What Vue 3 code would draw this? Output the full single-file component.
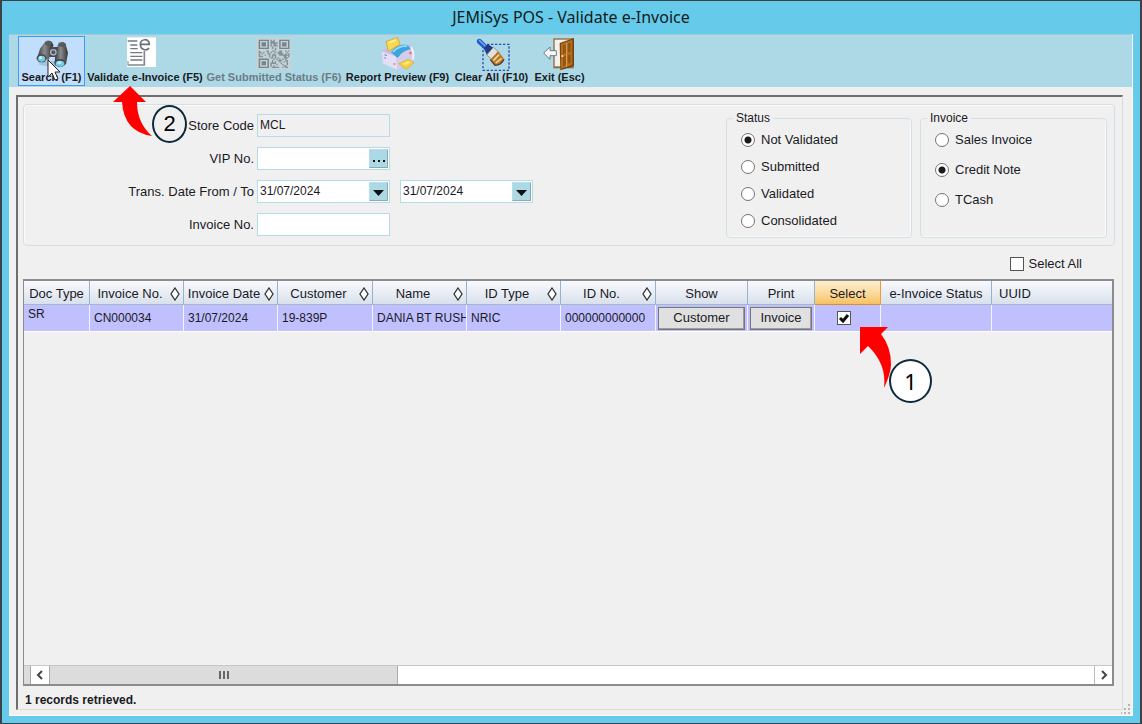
<script setup>
import { ref } from 'vue'

const status = ref('Not Validated')
const invoiceType = ref('Credit Note')
const selectAll = ref(false)
const rowSelected = ref(true)
const storeCode = ref('MCL')
const vipNo = ref('')
const dateFrom = ref('31/07/2024')
const dateTo = ref('31/07/2024')
const invoiceNo = ref('')

const statuses = ['Not Validated', 'Submitted', 'Validated', 'Consolidated']
const invoiceTypes = ['Sales Invoice', 'Credit Note', 'TCash']

const columns = [
  { name: 'Doc Type', cls: 'c-doc' },
  { name: 'Invoice No.', cls: 'c-std', sort: true },
  { name: 'Invoice Date', cls: 'c-std', sort: true },
  { name: 'Customer', cls: 'c-wide', sort: true },
  { name: 'Name', cls: 'c-std', sort: true },
  { name: 'ID Type', cls: 'c-std', sort: true },
  { name: 'ID No.', cls: 'c-wide', sort: true },
  { name: 'Show', cls: 'c-show' },
  { name: 'Print', cls: 'c-print' },
  { name: 'Select', cls: 'c-select' },
  { name: 'e-Invoice Status', cls: 'c-status' },
  { name: 'UUID', cls: 'c-uuid' },
]
const values = ['CN000034', '31/07/2024', '19-839P', 'DANIA BT RUSH', 'NRIC', '000000000000']

// Data modules of the 21 x 21 code; the three finder squares are drawn separately.
const inFinder = (x, y) => (x < 8 && y < 8) || (x > 12 && y < 8) || (x < 8 && y > 12)
const modules = []
for (let y = 0; y < 21; y++) {
  for (let x = 0; x < 21; x++) {
    const h = (x * 73 + y * 151 + x * y * 37 + ((x * x * 13) ^ (y * y * 29))) % 17
    if (!inFinder(x, y) && h < 8) modules.push(`M${x} ${y}h1v1h-1z`)
  }
}
const qrPath = modules.join('')
const finders = [[0, 0], [14, 0], [0, 14]]
</script>

<template>
  <main class="window">
    <h1 class="title">JEMiSys POS - Validate e-Invoice</h1>

    <div class="client">
      <nav class="toolbar" aria-label="Actions">
        <button type="button" class="tool t-search">
          <svg class="icon" viewBox="0 0 108 102" aria-hidden="true">
            <defs>
              <linearGradient id="barrel" x1="0" y1="0" x2="1" y2="0">
                <stop offset="0" stop-color="#3a3a3c" />
                <stop offset=".45" stop-color="#8b8b8d" />
                <stop offset="1" stop-color="#323234" />
              </linearGradient>
            </defs>
            <ellipse cx="56" cy="80" rx="42" ry="8" fill="#8ea3b8" opacity=".5" />
            <path d="M34 13q10-6 20 2l4 10-14 44-34-8 8-26z" fill="url(#barrel)" />
            <path d="M74 17q12-6 20 2l8 28-6 34-34-4 2-30z" fill="url(#barrel)" />
            <path d="M48 30h24l-4 30H46z" fill="#48494c" />
            <circle cx="58" cy="46" r="10" fill="#adb8c8" />
            <circle cx="58" cy="46" r="6" fill="#4c5564" />
            <path d="M34 16l12-4 8 6-8 8-14-2zM74 20l14-4 9 7-8 8-14-3z" fill="#5a5a5c" />
            <ellipse cx="23" cy="64" rx="15" ry="12" fill="#44484c" />
            <ellipse cx="23" cy="65" rx="11" ry="9" fill="#74cbe4" />
            <ellipse cx="20" cy="62" rx="5" ry="4" fill="#c9f2fb" />
            <ellipse cx="78" cy="78" rx="17" ry="12" fill="#44484c" />
            <ellipse cx="78" cy="80" rx="13" ry="9" fill="#74cbe4" />
            <ellipse cx="76" cy="77" rx="7" ry="4" fill="#b7ebf7" />
          </svg>
          <span>Search (F1)</span>
        </button>
        <button type="button" class="tool t-validate">
          <svg class="icon" viewBox="0 0 108 102" aria-hidden="true">
            <path d="M0 1h87v89H0z" fill="#fff" />
            <path d="M2 12h29M10 24h21M10 35h22M10 47h36M10 58h36M10 69h36" stroke="#73797d" stroke-width="4" />
            <path d="M52 42v44M2 84h52" stroke="#80868a" stroke-width="5" fill="none" />
            <path d="M3 72v12" stroke="#9aa1a5" stroke-width="4" />
            <path d="M40 22H67C67 3 40 4 40 22C40 40 60 42 66 33" stroke="#697176" stroke-width="5" fill="none" />
          </svg>
          <span>Validate e-Invoice (F5)</span>
        </button>
        <button type="button" class="tool t-get" disabled>
          <svg class="icon" viewBox="0 0 108 102" aria-hidden="true">
            <path d="M1 3h105v95H1z" fill="#c5d2d7" />
            <g transform="translate(8 8) scale(4.4 4.05)">
              <path :d="qrPath" fill="#83939a" />
              <g v-for="([x, y], i) in finders" :key="i" fill="#75858c">
                <path :transform="`translate(${x} ${y})`" fill-rule="evenodd" d="M0 0h7v7H0zM1 1v5h5V1zM2 2h3v3H2z" />
              </g>
            </g>
          </svg>
          <span>Get Submitted Status (F6)</span>
        </button>
        <button type="button" class="tool t-report">
          <svg class="icon" viewBox="0 0 108 102" aria-hidden="true">
            <path d="M5 41L38 24l52-2 13 18-3 42-48 17-44-23z" fill="#c7bfe6" />
            <path d="M5 43l44 16 3 40-43-20z" fill="#e4def6" />
            <path d="M49 59l48-27 5 39-50 28z" fill="#d4cdea" />
            <path d="M18 14l34-13 8 21-35 21z" fill="#f8d951" stroke="#d8ae36" stroke-width="3" />
            <path d="M27 17l20-8" stroke="#fff2a0" stroke-width="5" />
            <path d="M33 46q18-27 48-22l14 12q-28 3-42 27z" fill="#3aa5dd" />
            <path d="M39 45q18-20 42-17" stroke="#94e1f7" stroke-width="5" fill="none" />
            <path d="M92 30q12 13 7 38" stroke="#f2effc" stroke-width="6" fill="none" />
            <path d="M56 80l28-13 18 10-23 20z" fill="#f7cf3c" stroke="#dba531" stroke-width="2" />
            <path d="M68 80l17-8 7 4-15 9z" fill="#ffed7b" />
            <circle cx="91" cy="48" r="4" fill="#ea6f8e" />
            <circle cx="43" cy="81" r="3" fill="#f2825c" />
            <path d="M13 53l8 3M13 62l5 2" stroke="#8377b9" stroke-width="3" />
          </svg>
          <span>Report Preview (F9)</span>
        </button>
        <button type="button" class="tool t-clear">
          <svg class="icon" viewBox="0 0 108 102" aria-hidden="true">
            <path d="M27 22h78v78H27z" fill="none" stroke="#2850ae" stroke-width="4" stroke-dasharray="7 5" />
            <path d="M9 9q7-8 14 0l17 17-10 10L12 20q-6-5-3-11z" fill="#235bc8" />
            <path d="M15 9l22 22" stroke="#78adf4" stroke-width="4" />
            <path d="M29 34l12-13 17 11-19 22z" fill="#203e83" />
            <path d="M38 54l20-23 17 15-20 22z" fill="#dfe1e3" stroke="#6f7376" stroke-width="2" />
            <path d="M50 67l22-24 17 21q-5 20-26 20z" fill="#b87528" />
            <path d="M58 71l17-18M65 78l18-14" stroke="#f3d08b" stroke-width="5" />
            <path d="M49 68l14 17q19 0 27-18" fill="none" stroke="#4d3924" stroke-width="4" />
          </svg>
          <span>Clear All (F10)</span>
        </button>
        <button type="button" class="tool t-exit">
          <svg class="icon" viewBox="0 0 108 102" aria-hidden="true">
            <path d="M34 4h61v90H34z" fill="#8b6c43" />
            <path d="M38 8h52v80H38z" fill="#f3f1eb" />
            <path d="M53 18l43-15v84L55 100z" fill="#77430e" />
            <path d="M57 20l34-12v75L57 95z" fill="#b46e1c" />
            <path d="M63 25l8-3v27l-8 3zM77 20l9-4v28l-9 3zM63 60l8-3v27l-8 3zM77 55l9-3v25l-9 3z" fill="#925410" />
            <path d="M74 18v72" stroke="#dca052" stroke-width="3" />
            <circle cx="61" cy="57" r="3" fill="#ffe694" />
            <path d="M5 48l19-18v11h19v15H24v11z" fill="#f7fafc" stroke="#6d7c85" stroke-width="3" />
          </svg>
          <span>Exit (Esc)</span>
        </button>
      </nav>

      <section class="panel">
        <form class="filters" @submit.prevent>
          <div class="fields">
            <label for="store">Store Code</label>
            <div class="box readonly"><input id="store" v-model="storeCode" type="text" readonly /></div>

            <label for="vip">VIP No.</label>
            <div class="box">
              <input id="vip" v-model="vipNo" type="text" />
              <button type="button" class="mini" aria-label="Look up VIP">
                <svg viewBox="0 0 17 17" aria-hidden="true"><path d="M3 10h2v2H3zM8 10h2v2H8zM13 10h2v2h-2z" /></svg>
              </button>
            </div>

            <label for="from">Trans. Date From / To</label>
            <div class="dates">
              <div class="box">
                <input id="from" v-model="dateFrom" type="text" />
                <button type="button" class="mini" aria-label="Choose start date">
                  <svg viewBox="0 0 17 17" aria-hidden="true"><path d="M3 7h11l-5.500 6z" /></svg>
                </button>
              </div>
              <div class="box">
                <input v-model="dateTo" type="text" aria-label="Trans. Date To" />
                <button type="button" class="mini" aria-label="Choose end date">
                  <svg viewBox="0 0 17 17" aria-hidden="true"><path d="M3 7h11l-5.500 6z" /></svg>
                </button>
              </div>
            </div>

            <label for="invno">Invoice No.</label>
            <div class="box"><input id="invno" v-model="invoiceNo" type="text" /></div>
          </div>

          <fieldset class="group g-status">
            <legend>Status</legend>
            <label v-for="s in statuses" :key="s"><input v-model="status" type="radio" name="status" :value="s" />{{ s }}</label>
          </fieldset>
          <fieldset class="group g-invoice">
            <legend>Invoice</legend>
            <label v-for="t in invoiceTypes" :key="t"><input v-model="invoiceType" type="radio" name="type" :value="t" />{{ t }}</label>
          </fieldset>
        </form>

        <div class="select-all">
          <label><input v-model="selectAll" type="checkbox" />Select All</label>
        </div>

        <div class="grid">
          <div class="rows">
            <table>
              <thead>
                <tr>
                  <th v-for="c in columns" :key="c.name" :class="c.cls" scope="col">
                    <div class="head">
                      <span>{{ c.name }}</span>
                      <svg v-if="c.sort" class="sort" viewBox="0 0 10 14" aria-hidden="true">
                        <path d="M5 1l4 6-4 6-4-6z" fill="#fff" stroke="#333" stroke-width="1.300" />
                      </svg>
                    </div>
                  </th>
                </tr>
              </thead>
              <tbody>
                <tr>
                  <td class="top">SR</td>
                  <td v-for="v in values" :key="v">{{ v }}</td>
                  <td class="act"><button type="button">Customer</button></td>
                  <td class="act"><button type="button">Invoice</button></td>
                  <td class="tick">
                    <label class="check">
                      <input v-model="rowSelected" type="checkbox" aria-label="Select CN000034" />
                      <svg v-if="rowSelected" viewBox="0 0 14 14" aria-hidden="true"><path d="M3 7l3 3 5-6" /></svg>
                    </label>
                  </td>
                  <td></td>
                  <td></td>
                </tr>
              </tbody>
            </table>
          </div>
          <div class="scroll">
            <div class="split"></div>
            <button type="button" class="end" aria-label="Scroll left">
              <svg viewBox="0 0 18 18" aria-hidden="true"><path d="M11 5L7 9l4 4" /></svg>
            </button>
            <div class="track">
              <div class="thumb"><i></i><i></i><i></i></div>
            </div>
            <button type="button" class="end right" aria-label="Scroll right">
              <svg viewBox="0 0 18 18" aria-hidden="true"><path d="M7 5l4 4-4 4" /></svg>
            </button>
          </div>
        </div>

        <p class="message">1 records retrieved.</p>
      </section>

      <svg class="grip" viewBox="0 0 10 10" aria-hidden="true">
        <path d="M7 0h2v2H7zM7 4h2v2H7zM7 8h2v2H7zM3 4h2v2H3zM3 8h2v2H3zM0 8h1v2H0z" />
      </svg>
    </div>

    <svg class="arrow arrow-two" viewBox="0 0 40 52" aria-hidden="true">
      <path d="M17 0L33 16H24Q24 37 39 50Q11 46 9 16H0z" />
    </svg>
    <span class="badge badge-two">2</span>
    <svg class="arrow arrow-one" viewBox="0 0 34 62" aria-hidden="true">
      <path d="M0 0H28L21 7Q31 20 31 37Q31 46 24 61Q27 37 8 19L0 27z" />
    </svg>
    <span class="badge badge-one">1</span>
    <svg class="cursor" viewBox="0 0 14 23" aria-hidden="true">
      <path d="M1 1v17l4-4 3 7 3-1-3-7h5z" fill="#fff" stroke="#222" />
    </svg>
  </main>
</template>

<style>
html, body { margin: 0; }
</style>

<style scoped>
* { box-sizing: border-box; }
.window {
  position: relative;
  display: flex;
  flex-direction: column;
  min-height: 100vh;
  padding: 0 7px 7px;
  border: 1px solid #3c4347;
  border-width: 1px 2px;
  background: #66cbea;
  font-family: "Liberation Sans", Arial, sans-serif;
  font-size: 13px;
  line-height: 16px;
  color: #1a1a1f;
}
.title {
  margin: 0;
  height: 33px;
  text-align: center;
  font: 400 16px/33px "Noto Sans", "Open Sans", sans-serif;
  color: #101a20;
}
button, input { font: inherit; color: inherit; margin: 0; padding: 0; }
.client {
  position: relative;
  flex: 1;
  display: flex;
  flex-direction: column;
  background: #f0f0f0;
  border-right: 1px solid #fff;
  border-bottom: 1px solid #fff;
}

.toolbar {
  display: flex;
  padding: 1px 9px 0;
  height: 53px;
  background: #add8e6;
  border-top: 1px solid #9fc9d8;
}
.tool {
  display: flex;
  flex-direction: column;
  align-items: center;
  height: 50px;
  border: 1px solid transparent;
  background: none;
  font-size: 11px;
  line-height: 13px;
  font-weight: 700;
  white-space: nowrap;
}
.tool:disabled { color: #6c7c83; }
.icon { width: 36px; height: 34px; flex: none; }
.t-search { width: 67px; background: #c1defc; border-color: #3f9bf5; }
.t-validate { width: 120px; }
.t-get { width: 138px; }
.t-report { width: 109px; }
.t-clear { width: 79px; }
.t-exit { width: 57px; }

.panel {
  flex: 1;
  display: flex;
  flex-direction: column;
  margin: 8px 9px 5px 7px;
  padding: 7px 7px 0 5px;
  border: 2px solid #6e6e6e;
  border-right: 1px solid #dcdcdc;
  border-bottom: 1px solid #dcdcdc;
}
.filters {
  display: flex;
  height: 142px;
  padding: 6px 7px 7px 0;
  border: 1px solid #d3dfe6;
  border-radius: 4px;
  box-shadow: inset 1px 1px #fafafa;
}
.fields {
  flex: 1;
  display: grid;
  grid-template-columns: 230px auto;
  grid-auto-rows: 23px;
  align-content: start;
  justify-content: start;
  gap: 10px 3px;
  padding-top: 3px;
}
.fields > label { text-align: right; line-height: 24px; }
.dates { display: flex; gap: 10px; }
.box {
  display: flex;
  width: 133px;
  height: 23px;
  padding: 1px;
  border: 1px solid #b4dce8;
  background: #fff;
}
.box.readonly { background: #f0f0f0; }
.box input {
  flex: 1;
  min-width: 0;
  height: 18px;
  padding-left: 1px;
  border: 0;
  background: none;
  font-size: 12px;
  outline: none;
}
.mini {
  width: 19px;
  height: 19px;
  border: 1px solid #b9dde8;
  border-right-color: #8fa7af;
  border-bottom-color: #8fa7af;
  background: #add8e6;
}
.mini svg { display: block; width: 17px; height: 17px; fill: #111; }

.group {
  min-width: 0;
  width: 186px;
  margin: 0 0 0 8px;
  padding: 1px 0 0 14px;
  border: 1px solid #d3dfe6;
  border-radius: 4px;
  box-shadow: inset -1px -1px #fafafa;
}
.group legend { margin-left: -8px; padding: 0 3px; font-size: 12px; line-height: 14px; }
.group label { display: flex; align-items: center; gap: 6px; height: 27px; }
.g-invoice { width: 187px; padding-top: 0; }
.g-invoice label { height: 30px; }
.group input {
  appearance: none;
  width: 14px;
  height: 14px;
  border: 1px solid #747474;
  border-radius: 50%;
  background: #fff;
}
.group input:checked { background: radial-gradient(circle, #1b1b1b 3px, #fff 4px); }

.select-all { display: flex; justify-content: flex-end; align-items: center; height: 33px; padding: 2px 33px 0 0; }
.select-all label { display: flex; align-items: center; gap: 5px; }
input[type="checkbox"] {
  appearance: none;
  display: block;
  width: 14px;
  height: 14px;
  border: 1px solid #555;
  background: #fff;
}

.grid {
  flex: 1;
  display: flex;
  flex-direction: column;
  margin-right: 1px;
  border: 2px solid #8c8c8c;
  border-left-width: 1px;
}
.rows { flex: 1; overflow: hidden; }
table { width: 100%; table-layout: fixed; border-collapse: separate; border-spacing: 0; }
th {
  height: 23px;
  padding: 0;
  font-weight: 400;
  border-right: 1px solid #92b4d0;
  border-bottom: 1px solid #a3b8cc;
  background: linear-gradient(#f7f9fc, #e8edf4 55%, #d8e0eb);
  white-space: nowrap;
}
th:last-child, td:last-child { border-right: 0; }
.head { display: flex; align-items: center; height: 23px; padding-top: 2px; }
.head span { flex: 1; text-align: center; }
.sort { width: 10px; height: 14px; margin-right: 3px; }
.c-doc { width: 66px; }
.c-std { width: 94px; }
.c-wide { width: 95px; }
.c-show { width: 92px; }
.c-print { width: 67px; }
.c-select { width: 66px; background: linear-gradient(#fdeed0, #fbd795 60%, #f5c160); border-right-color: #f09a3e; border-bottom-color: #d58f35; }
.c-status { width: 111px; }
.c-uuid .head span { text-align: left; padding-left: 7px; }
td {
  height: 27px;
  padding: 0 0 0 4px;
  overflow: hidden;
  white-space: nowrap;
  font-size: 12px;
  background: #c0c0ff;
  border-right: 1px solid #f4f4ff;
  border-bottom: 1px solid #fff;
}
td.top { vertical-align: top; padding-top: 1px; }
td.act { padding: 0 2px; }
td.act button {
  display: block;
  width: 100%;
  height: 23px;
  border: 1px solid #777;
  box-shadow: inset -1px -1px #9d9d9d;
  background: #e0e0e0;
  font-size: 13px;
}
td.tick { padding: 0 0 0 22px; }
.check { position: relative; display: block; width: 14px; height: 14px; }
.check svg {
  position: absolute;
  inset: 0;
  fill: none;
  stroke: #111;
  stroke-width: 3;
  pointer-events: none;
}

.scroll { display: flex; height: 19px; border-top: 1px solid #c6c6c6; background: #fff; }
.split { width: 7px; background: #dcdcdc; border-right: 1px solid #a8a8a8; }
.end { width: 18px; border: 0; background: #fff; }
.end svg { display: block; width: 18px; height: 18px; fill: none; stroke: #444; stroke-width: 2; }
.end.right { border-left: 1px solid #bbb; }
.track { flex: 1; }
.thumb {
  display: flex;
  align-items: center;
  justify-content: center;
  gap: 2px;
  width: 33.4%;
  height: 100%;
  background: #dcdcdc;
  border: solid #aaa;
  border-width: 0 1px;
}
.thumb i { width: 2px; height: 8px; background: #666; }
.message { margin: 0; height: 23px; padding: 0 2px; font-size: 12px; line-height: 28px; font-weight: 700; }
.grip { position: absolute; right: 1px; bottom: 1px; width: 10px; height: 10px; fill: #b4b4b4; }

.arrow { position: absolute; fill: #f00; }
.arrow-two { left: 111px; top: 85px; width: 40px; height: 52px; }
.arrow-one { left: 858px; top: 326px; width: 34px; height: 62px; }
.badge {
  position: absolute;
  display: flex;
  align-items: center;
  justify-content: center;
  border: 2px solid #0c2a3a;
  border-radius: 50%;
  font: 22px/24px "Liberation Sans", Arial, sans-serif;
  color: #000;
}
.badge-two { left: 150px; top: 104px; width: 35px; height: 38px; background: #f0f0f0; }
.badge-one { left: 887px; top: 358px; width: 43px; height: 44px; background: #fff; font-family: "Noto Sans", sans-serif; }
.cursor { position: absolute; left: 45px; top: 58px; width: 14px; height: 23px; }
</style>
